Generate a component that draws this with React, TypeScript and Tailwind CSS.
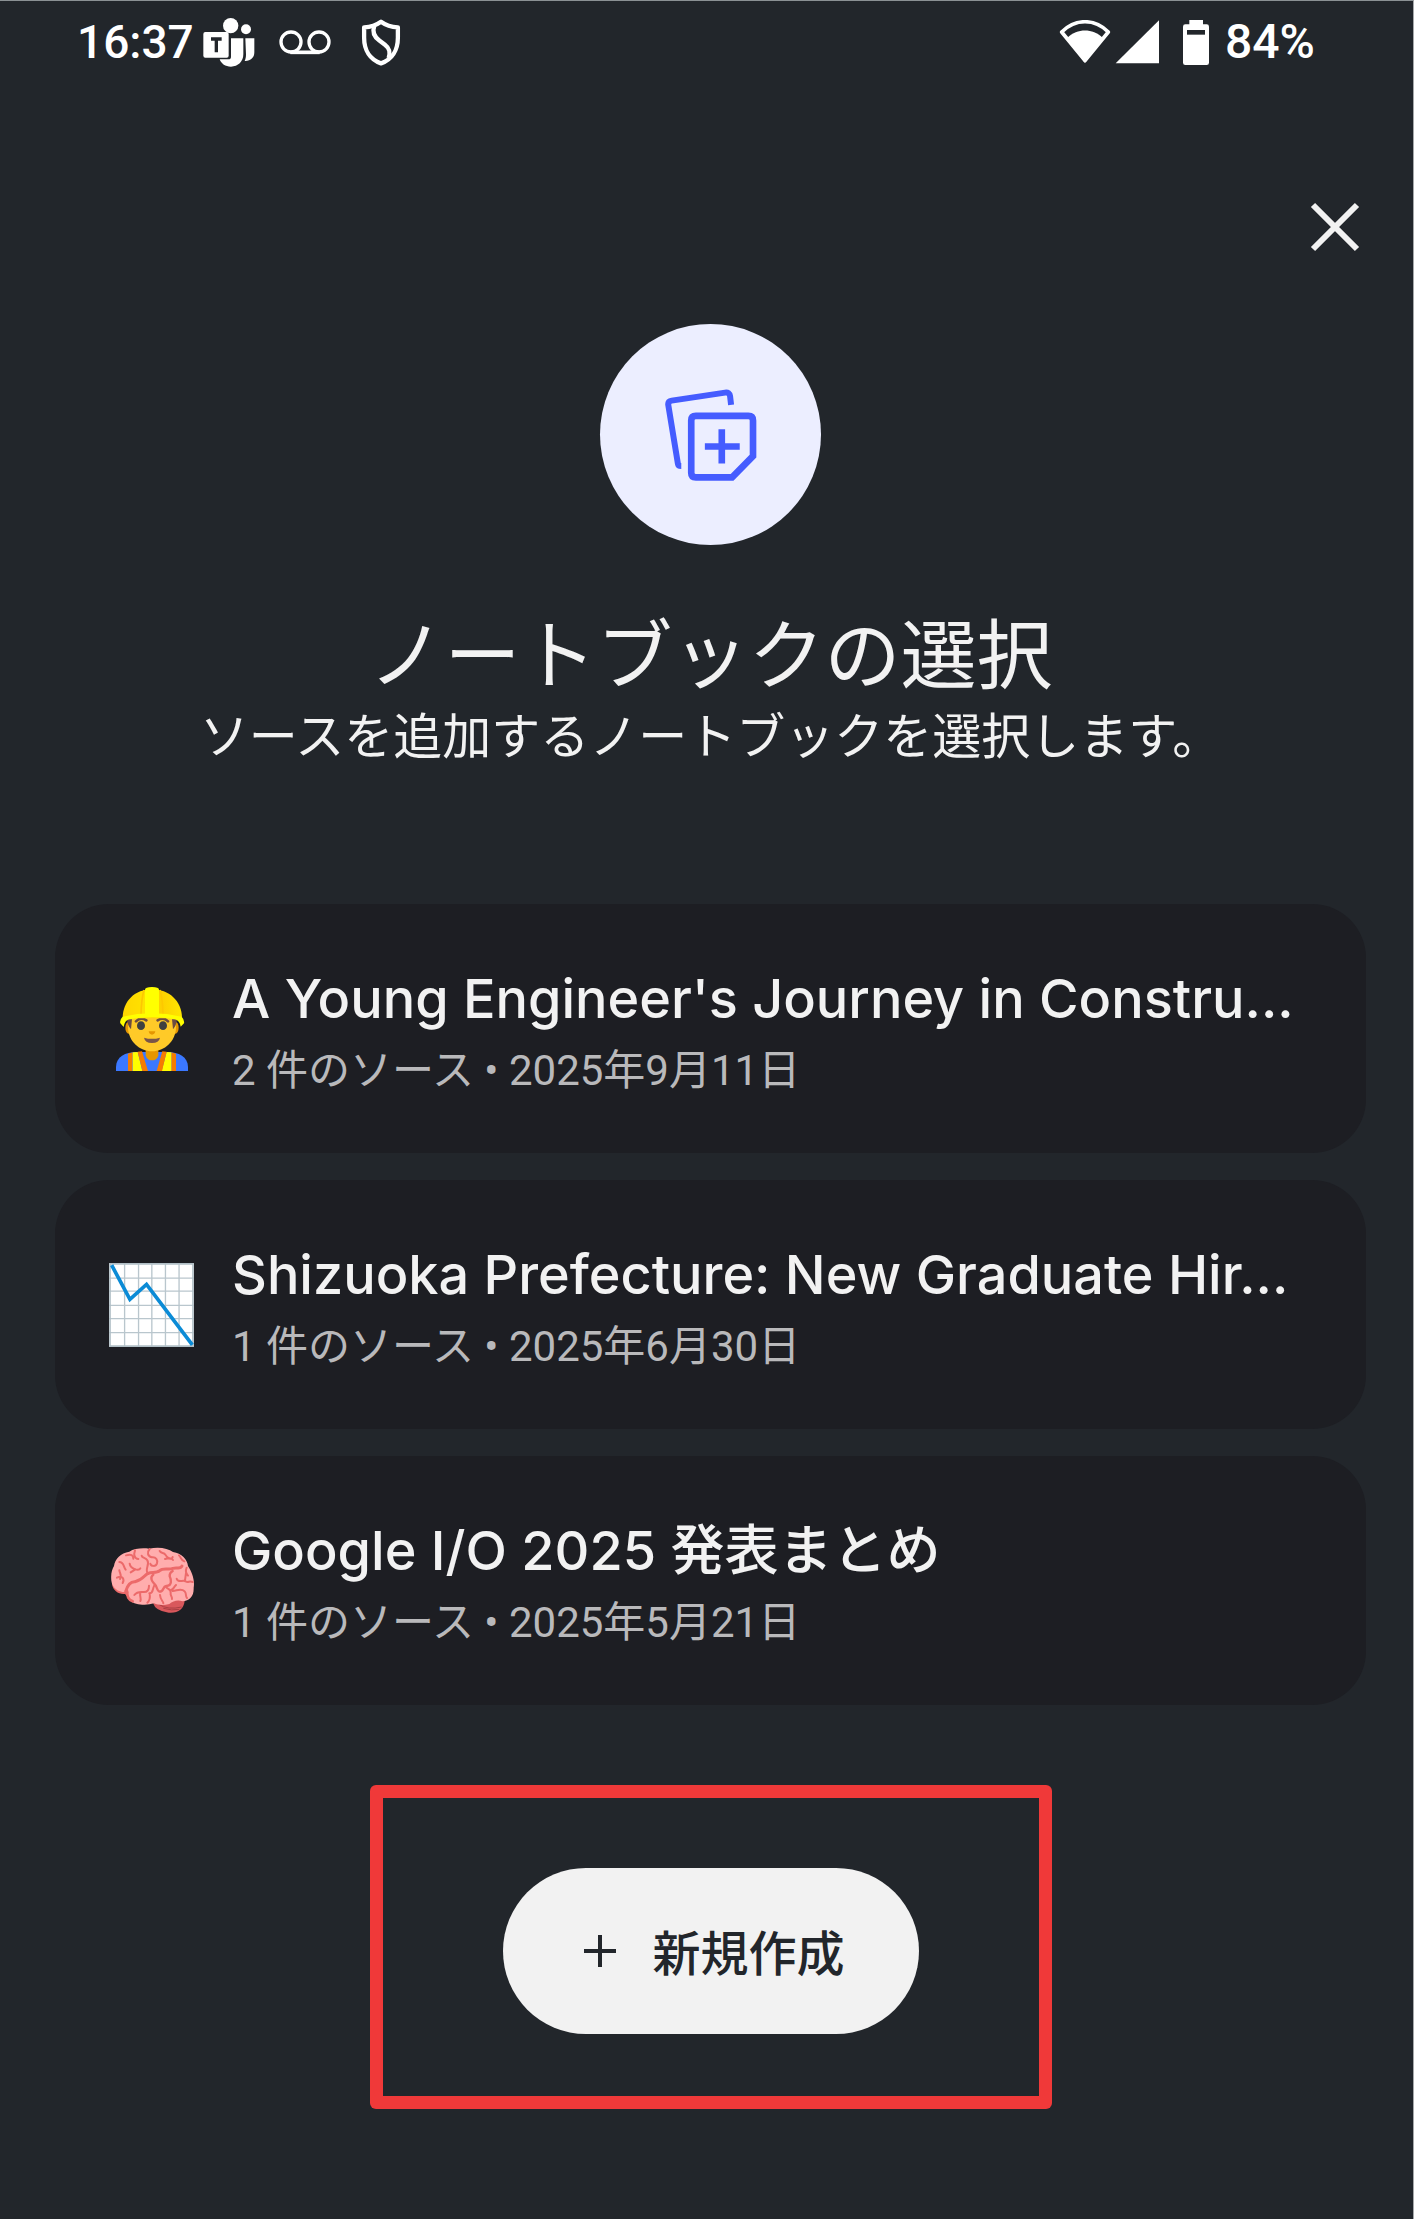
import type { ReactNode } from "react"

const TeamsIcon = () => (
  <svg viewBox="428 50 156 150" className="h-[50px] w-[52px]" fill="#fff" aria-hidden="true">
    <circle cx="511" cy="76" r="23" />
    <circle cx="557" cy="87" r="15" />
    <path d="M512 114h37v48c0 22-16 37-37 37-17 0-29-8-34-22h26q8 0 8-8z" />
    <path d="M555 114h27v42c0 17-12 27-29 26 3-6 4-12 4-20z" />
    <rect x="429" y="95" width="76" height="77" rx="6" />
    <path d="M452 111h32v10h-11v35h-10v-35h-11z" fill="#22262b" />
  </svg>
)

const VoicemailIcon = () => (
  <svg viewBox="656 84 156 78" className="h-[26px] w-[52px]" fill="none" stroke="#fff" strokeWidth="10" aria-hidden="true">
    <circle cx="692" cy="123" r="30" />
    <circle cx="776" cy="123" r="30" />
    <path d="M690 154h88" strokeWidth="11" />
  </svg>
)

const ShieldIcon = () => (
  <svg viewBox="906 58 120 142" className="h-[47px] w-10" fill="none" stroke="#fff" strokeWidth="13" strokeLinejoin="round" aria-hidden="true">
    <path d="M966 66c-15 11-31 16-51 17v32c0 37 18 66 51 77 33-11 51-40 51-77V83c-20-1-36-6-51-17z" />
    <path d="M946 78c-7 19 0 34 15 45l17 13c14 11 17 22 11 40" />
  </svg>
)

const WifiIcon = () => (
  <svg viewBox="56 56 156 132" className="h-11 w-[52px]" aria-hidden="true">
    <path d="M64 92C105 51 163 51 204 92l-70 86z" fill="none" stroke="#fff" strokeWidth="11" strokeLinejoin="round" />
    <path d="M81 109C112 80 156 80 187 109l-53 76z" fill="#fff" />
  </svg>
)

const SignalIcon = () => (
  <svg viewBox="222 56 132 132" className="size-11" fill="#fff" aria-hidden="true">
    <path d="M354 57v129H224z" />
  </svg>
)

const BatteryIcon = () => (
  <svg viewBox="429 51 78 135" className="h-[45px] w-[26px]" aria-hidden="true">
    <path d="M448 51h41v13h11q7 0 7 7v108q0 7-7 7h-64q-7 0-7-7V71q0-7 7-7h12z" fill="#fff" />
    <path d="M441 81h54v14h-54z" fill="#22262b" />
  </svg>
)

const NotebookAddIcon = () => (
  <svg viewBox="255 233 277 278" className="h-[93px] w-[92px]" fill="none" stroke="#455cff" strokeWidth="20" aria-hidden="true">
    <path d="M334 330q0-14 14-14h158q14 0 14 14v107l-63 64H348q-14 0-14-14z" />
    <path d="M426 356v103M375 408h105" />
    <path d="M454 283l-3-26q-2-13-15-11l-161 24q-12 2-10 14l29 177q1 6 10 6" strokeWidth="18" />
  </svg>
)

const WorkerEmoji = () => (
  <svg viewBox="207 288 255 252" className="h-[84px] w-[85px]" aria-hidden="true">
    <defs>
      <linearGradient id="helmet" x1="0" x2="1">
        <stop offset="0" stopColor="#ffd600" />
        <stop offset=".35" stopColor="#ffe100" />
        <stop offset=".65" stopColor="#fdd000" />
        <stop offset="1" stopColor="#ffe600" />
      </linearGradient>
    </defs>
    <path d="M228 540v-12c0-30 28-45 62-45h92c34 0 62 15 62 45v12z" fill="#3b78ff" />
    <path d="M264 488l14-4-1 56h-13z" fill="#f57c00" />
    <path d="M278 484l15-1 14 57h-29z" fill="#ff0" />
    <path d="M293 482l13-1 18 59h-17z" fill="#f57c00" />
    <path d="M408 488l-14-4v56h14z" fill="#f57c00" />
    <path d="M394 484l-14-1-15 57h29z" fill="#ff0" />
    <path d="M380 482l-13-1-17 59h16z" fill="#f57c00" />
    <path d="M317 465h38v29q-5 14-19 14t-19-14z" fill="#e59600" />
    <ellipse cx="266" cy="410" rx="10" ry="18" fill="#e59600" />
    <ellipse cx="406" cy="410" rx="10" ry="18" fill="#e59600" />
    <path d="M264 360h144v48c0 43-35 73-72 73s-72-30-72-73z" fill="#ffca28" />
    <path d="M261 385h15l-3 30q-10-10-12-30zM411 385h-15l3 30q10-10 12-30z" fill="#6d4c41" />
    <ellipse cx="303" cy="404" rx="12" ry="13" fill="#404040" />
    <ellipse cx="369" cy="404" rx="12" ry="13" fill="#404040" />
    <path d="M288 391q14-14 31-3M353 388q17-11 31 3" fill="none" stroke="#6d4c41" strokeWidth="8" strokeLinecap="round" />
    <path d="M326 421h20q-2 10-10 10t-10-10z" fill="#e59600" />
    <path d="M312 440q24 7 48 0-3 16-24 16t-24-16z" fill="#795548" />
    <path d="M248 382c0-52 37-87 88-87s90 35 90 87z" fill="url(#helmet)" />
    <path d="M303 372q1-48 9-75M369 372q-1-48-9-75" fill="none" stroke="#fdc800" strokeWidth="5" />
    <path d="M248 377q88-20 177 0 9 9 7 20l-10 10q-3-18-17-22-69-13-138 0-13 4-16 23l-10-11q-3-11 7-20z" fill="#ff0" />
    <path d="M315 378v-82q0-8 21-8t21 8v82z" fill="#ff0" />
  </svg>
)

const ChartEmoji = () => (
  <svg viewBox="207 276 256 252" className="h-[84px] w-[85px]" fill="none" aria-hidden="true">
    <path d="M207 276h256v252H207z" fill="#fff" />
    <path d="M254 276v252M296 276v252M336 276v252M377 276v252M418 276v252M207 321h256M207 360h256M207 403h256M207 443h256M207 485h256" stroke="#b9c6cd" strokeWidth="4" />
    <path d="M210 278h250v248H210z" stroke="#b0bec5" strokeWidth="5" />
    <path d="M215 282l55 103 50-45 138 182" stroke="#0b8bd6" strokeWidth="11" />
  </svg>
)

const BrainEmoji = () => (
  <svg viewBox="15 12 255 252" className="h-[84px] w-[85px]" fill="none" aria-hidden="true">
    <path d="M147 204q7 24 47 29 43 3 48-35l-40-12z" fill="#d9585c" />
    <path d="M164 208q28 18 69 8M178 220q26 8 48 3" stroke="#a93f43" strokeWidth="3" />
    <path d="M24 148c3 18 19 31 39 29l17 20 30-30-40-40z" fill="#ec6a6a" />
    <path
      d="M76 50c14-10 41-12 59-9 30-7 57-1 72 10 26 4 43 22 45 42 12 18 21 43 17 65 1 27-12 40-34 41-12-6-28-2-39 8-16 5-34 4-46-2-22 7-59 5-70-8-10-10-11-18-6-27-26 5-49-8-52-33-2-22 2-34 8-44 3-22 20-39 46-43z"
      fill="#ffadad"
    />
    <g stroke="#ec6a6a" strokeWidth="6" strokeLinecap="round" strokeLinejoin="round">
      <path d="M65 169c6-20 14-30 28-29 24-5 27-19 39-25 14-4 26 0 35-8 10-10 30-1 40-7 12-4 22 4 27-7" strokeWidth="9" />
      <path d="M69 168c1 18 3 25 17 31" strokeWidth="8" />
      <path d="M133 117c-14-12 6-28-3-41-5-9-15-6-17-14" />
      <path d="M137 42c-9 10-6 22 6 25 13-2 19 8 16 18-4 11-18 9-20 1" />
      <path d="M93 46c-5 14-1 25 10 26M66 61c16-5 22 0 22 10M46 81c14 0 12 14 19 23M77 86c2 17 28 22 32 14M80 112l14-9M39 128c17-9 23 5 17 16M48 132c7-12-2-18-2-26" />
      <path d="M167 48c4 8 13 4 17 11 6 12 20 17 22 7M183 72c10-3 20-3 24 3M225 61c8 8 4 14 16 18" />
      <path d="M148 119c-12 9-3 21 2 26 11 9 7 22 16 25 15 1 8-15 21-17 19 0 14-21 10-29-1-9 4-13 9-16" strokeWidth="7" />
      <path d="M91 180c9-12 20-9 29-9 13 0 15-9 15-19M109 173c-3 13 4 17 0 25M137 176c2 13-1 22-7 27M151 151c-7 14-3 25-15 24M168 180c1 16 11 20 10 25M187 157c7 8 14 4 13 17-2 7 5 10 4 18" />
      <path d="M218 131c3 13 20 3 27 8 9 6 9-3 21 2M246 114l-3 22M206 168c15-2 26-10 36 1 7 8 1 14 7 20M216 150c-8 8-7 13-15 15M248 98c-4 9-3 17 4 24" />
    </g>
  </svg>
)

type Notebook = {
  title: string
  sources: number
  date: string
  icon: ReactNode
}

const notebooks: Notebook[] = [
  {
    title: "A Young Engineer's Journey in Constru...",
    sources: 2,
    date: "2025年9月11日",
    icon: <WorkerEmoji />,
  },
  {
    title: "Shizuoka Prefecture: New Graduate Hir...",
    sources: 1,
    date: "2025年6月30日",
    icon: <ChartEmoji />,
  },
  {
    title: "Google I/O 2025 発表まとめ",
    sources: 1,
    date: "2025年5月21日",
    icon: <BrainEmoji />,
  },
]

function StatusBar() {
  return (
    <header className="flex h-[82px] items-center justify-between pr-[92px] pl-[77px] text-[46px] leading-none font-medium text-white">
      <div className="flex items-center">
        <span className="w-[126px]">16:37</span>
        <TeamsIcon />
        <span className="ml-6"><VoicemailIcon /></span>
        <span className="ml-[30px]"><ShieldIcon /></span>
      </div>
      <div className="flex items-center">
        <WifiIcon />
        <span className="ml-1"><SignalIcon /></span>
        <span className="ml-6"><BatteryIcon /></span>
        <span className="ml-4 w-24 text-[48px]">84%</span>
      </div>
    </header>
  )
}

function NotebookCard({ notebook }: { notebook: Notebook }) {
  return (
    <li>
      <button className="flex h-[249px] w-full items-center gap-[38px] rounded-[54px] bg-[#1d1e23] px-[54px] text-left">
        <span className="shrink-0">{notebook.icon}</span>
        <span className="flex min-w-0 flex-col pt-2 whitespace-nowrap">
          <span className="font-['Inter','Noto_Sans_CJK_JP',sans-serif] text-[54px] leading-[76px] font-medium text-[#f2f2f2]">
            {notebook.title}
          </span>
          <span className="text-[42px] leading-[68px] text-[#b9b9bb]">
            {notebook.sources} 件のソース • {notebook.date}
          </span>
        </span>
      </button>
    </li>
  )
}

export default function App() {
  return (
    <div
      lang="ja"
      className="min-h-screen border-t border-r border-t-[#8b9194] border-r-[#a5a8aa] bg-[#22262b] font-['Roboto','Noto_Sans_CJK_JP',sans-serif] text-[#f2f2f2]"
    >
      <StatusBar />
      <main className="flex flex-col pr-[47px] pl-[55px]">
        <button aria-label="閉じる" className="mt-[113px] self-end p-[6px]">
          <svg viewBox="0 0 50 50" className="size-[50px]" fill="none" stroke="#f2f2f2" strokeWidth="6" aria-hidden="true">
            <path d="M3 3l44 44M47 3L3 47" />
          </svg>
        </button>

        <div className="mt-[66px] flex size-[221px] items-center justify-center self-center rounded-full bg-[#eceeff]">
          <NotebookAddIcon />
        </div>

        <h1 className="mt-[67px] text-center text-[76px] leading-[90px]">ノートブックの選択</h1>
        <p className="text-center text-[49px] leading-[72px]">ソースを追加するノートブックを選択します。</p>

        <ul className="mt-[130px] flex flex-col gap-[27px]">
          {notebooks.map((notebook) => (
            <NotebookCard key={notebook.title} notebook={notebook} />
          ))}
        </ul>

        <div className="mt-20 self-center rounded-md bg-[#f03939] p-[13px]">
          <div className="bg-[#22262b] px-[120px] pt-[70px] pb-[62px]">
            <button className="flex h-[166px] w-[416px] items-center justify-center gap-9 rounded-full bg-[#f2f2f2] pl-2 text-[48px] font-medium text-[#22262b]">
              <svg viewBox="0 0 32 32" className="size-8" stroke="currentColor" strokeWidth="4" aria-hidden="true">
                <path d="M16 0v32M0 16h32" />
              </svg>
              <span className="pt-2">新規作成</span>
            </button>
          </div>
        </div>
      </main>
    </div>
  )
}
